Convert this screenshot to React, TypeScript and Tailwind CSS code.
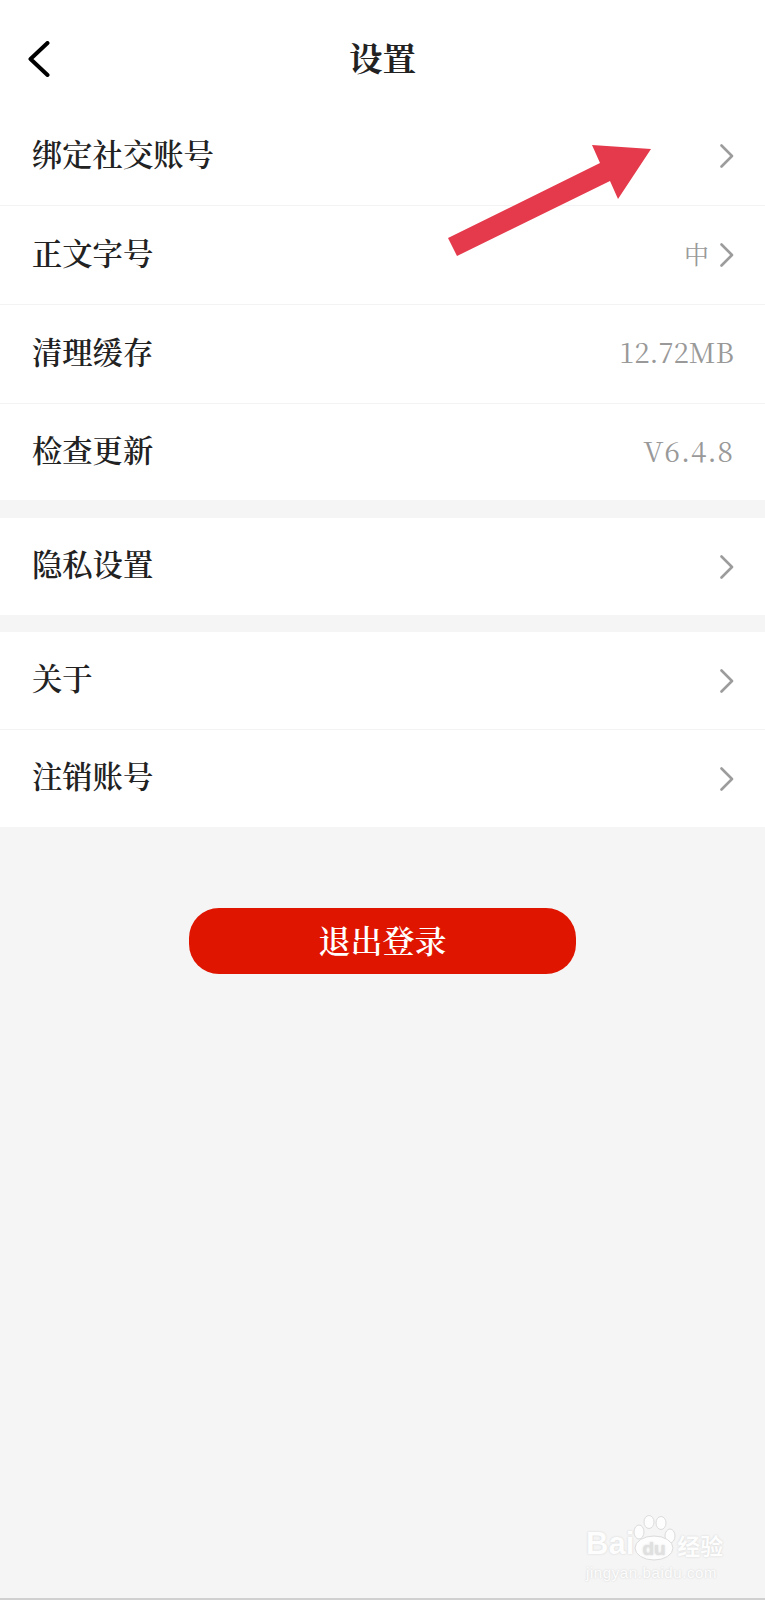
const SERIF = 'font-["Noto_Serif_CJK_SC","Liberation_Serif","Noto_Sans_CJK_SC",serif]'

interface RowProps {
  label: string
  value?: string
  valueClass?: string
  arrow?: boolean
  border?: boolean
  height?: string
}

function Chevron() {
  return (
    <svg width="14" height="24" viewBox="0 0 14 24" fill="none" className="shrink-0">
      <path d="M1.5 1.5 L12 12 L1.5 22.5" stroke="#9c9c9c" strokeWidth="2.6" strokeLinecap="round" strokeLinejoin="round" />
    </svg>
  )
}

function Row({ label, value, valueClass = 'text-[25px]', arrow, border, height = 'h-[97px]' }: RowProps) {
  return (
    <div className={`flex items-center justify-between pl-8 pr-[31px] ${height} ${border ? 'border-b border-[#f3f3f3]' : ''}`}>
      <span className="mb-[6px] text-[30.3px] leading-none font-semibold text-[#222222]">{label}</span>
      <div className="flex items-center gap-[11px]">
        {value && <span className={`mb-1 leading-none text-[#999999] ${valueClass}`}>{value}</span>}
        {arrow && <Chevron />}
      </div>
    </div>
  )
}

function Watermark() {
  return (
    <div className="absolute left-[586px] top-[1515px] w-[142px] whitespace-nowrap text-white opacity-80 [text-shadow:0_0_2px_#c9c9c9]">
      <div className="flex items-end">
        <span className="font-['Liberation_Sans',sans-serif] text-[31px] leading-[34px] font-bold">Bai</span>
        <svg width="44" height="46" viewBox="0 0 44 46" className="shrink-0 -ml-px">
          <g fill="#ffffff" stroke="#d6d6d6" strokeWidth="1">
            <ellipse cx="6" cy="17" rx="5" ry="7" />
            <ellipse cx="16" cy="7" rx="5" ry="6.5" />
            <ellipse cx="28" cy="8" rx="5" ry="6.5" />
            <ellipse cx="37" cy="21" rx="5" ry="7" />
            <ellipse cx="21" cy="33" rx="19" ry="12" />
          </g>
          <text x="21" y="40" textAnchor="middle" fontFamily="Liberation Sans" fontWeight="700" fontSize="19" fill="#dcdcdc">du</text>
        </svg>
        <span className="font-['Noto_Sans_CJK_SC',sans-serif] text-[23px] leading-[32px] font-bold">经验</span>
      </div>
      <div className="mt-1 font-['Liberation_Sans',sans-serif] text-[15px] leading-4 tracking-[0.6px]">jingyan.baidu.com</div>
    </div>
  )
}

export default function App() {
  return (
    <div className={`relative h-[1600px] w-[765px] overflow-hidden border-b-2 border-[#d0d0d0] bg-[#f5f5f5] ${SERIF}`}>
      <div className="bg-white">
        <div className="flex h-[107px] items-center justify-between pl-7 pr-7 pt-[11px]">
          <svg width="22" height="36" viewBox="0 0 22 36" fill="none">
            <path d="M19.5 2 L2.5 18 L19.5 34" stroke="#000000" strokeWidth="4" strokeLinecap="round" strokeLinejoin="round" />
          </svg>
          <h1 className="mb-1 text-[33.5px] leading-none font-bold text-[#222222]">设置</h1>
          <div className="w-[22px]" />
        </div>
        <Row label="绑定社交账号" arrow border height="h-[99px]" />
        <Row label="正文字号" value="中" arrow border height="h-[99px]" />
        <Row label="清理缓存" value="12.72MB" valueClass="text-[27.5px]" border height="h-[99px]" />
        <Row label="检查更新" value="V6.4.8" valueClass="text-[28px] tracking-[1px]" height="h-[96px]" />
      </div>

      <div className="mt-[18px] bg-white">
        <Row label="隐私设置" arrow />
      </div>

      <div className="mt-[17px] bg-white">
        <Row label="关于" arrow border height="h-[98px]" />
        <Row label="注销账号" arrow />
      </div>

      <div className="mt-[81px] flex justify-center">
        <button className="flex h-[66px] w-[387px] items-center justify-center rounded-[30px] bg-[#e01500] pb-1 text-[32px] leading-none font-semibold text-white">
          退出登录
        </button>
      </div>

      {/* annotation arrow on top of the screenshot */}
      <svg width="230" height="130" viewBox="0 0 230 130" className="absolute left-[440px] top-[135px]">
        <polygon points="8,103 160,28 152,10 211,14 178,64 170,46 17,121" fill="#e43a4b" />
      </svg>

      <Watermark />
    </div>
  )
}
